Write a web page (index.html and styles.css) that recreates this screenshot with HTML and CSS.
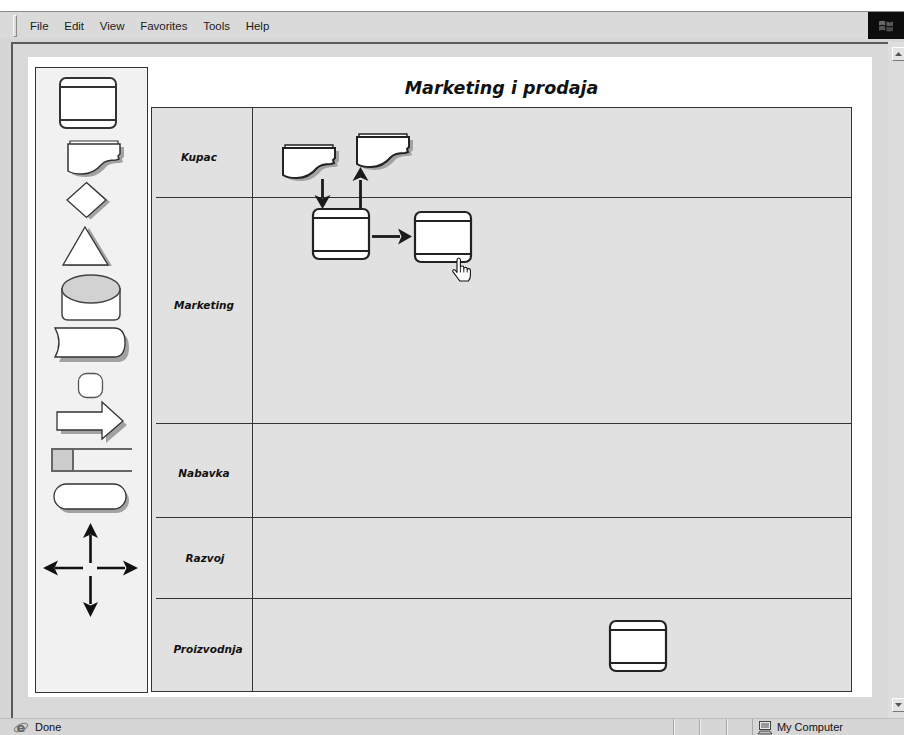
FILE: index.html
```html
<!DOCTYPE html>
<html lang="sr">
<head>
<meta charset="utf-8">
<title>Marketing i prodaja</title>
<link rel="stylesheet" href="styles.css">
</head>
<body>
<div class="browser">
  <div class="title-gap"></div>

  <div class="menubar">
    <span class="grip"></span>
    <ul class="menu">
      <li>File</li>
      <li>Edit</li>
      <li>View</li>
      <li>Favorites</li>
      <li>Tools</li>
      <li>Help</li>
    </ul>
    <div class="throbber">
      <svg width="16" height="14" viewBox="0 0 16 14">
        <path d="M1 2.5 Q4 1 7.2 2.3 V6.4 Q4 5.2 1 6.6 Z" fill="#6a6a6a"/>
        <path d="M8.4 2.6 Q11.5 4 15 2.4 V6.6 Q11.5 8 8.4 6.8 Z" fill="#5a5a5a"/>
        <path d="M1 7.6 Q4 6.2 7.2 7.5 V11.6 Q4 10.4 1 11.8 Z" fill="#555"/>
        <path d="M8.4 7.8 Q11.5 9.2 15 7.6 V11.8 Q11.5 13.2 8.4 12 Z" fill="#4a4a4a"/>
      </svg>
    </div>
  </div>

  <div class="client">
    <div class="viewport">
      <div class="page">

        <aside class="palette">
          <svg width="111" height="624" viewBox="0 0 111 624">
            <!-- process -->
            <rect x="24" y="10" width="56" height="50" rx="6" fill="#fff" stroke="#333" stroke-width="2"/>
            <path d="M24 19H80M24 52H80" stroke="#333" stroke-width="2"/>

            <!-- document -->
            <g transform="translate(31 72)">
              <path class="shade" transform="translate(4 3)" d="M1 4H53V14L51 16L52 19L49 20C42 20 38 21 35 24C30 30 24 34 15 34C9 34 4 33 1 31Z"/>
              <path d="M3 4V1H51V4" fill="#fff" stroke="#333" stroke-width="1.2"/>
              <path d="M1 4H53V14L51 16L52 19L49 20C42 20 38 21 35 24C30 30 24 34 15 34C9 34 4 33 1 31Z" fill="#fff" stroke="#333" stroke-width="1.5"/>
            </g>

            <!-- decision -->
            <polygon class="shade" points="54.5,117 74,134 54.5,151.5 35,134"/>
            <polygon points="50.5,114.5 70,132 50.5,149.5 31,132" fill="#fff" stroke="#333" stroke-width="1.3"/>

            <!-- merge -->
            <polygon class="shade" points="53,160 76,198 31,198"/>
            <polygon points="49,159 72,197 27,197" fill="#fff" stroke="#333" stroke-width="1.3"/>

            <!-- stored data -->
            <path d="M26 220V246Q26 252 32 252H78Q84 252 84 246V220" fill="#fff" stroke="#444" stroke-width="1.5"/>
            <ellipse cx="55" cy="221" rx="29" ry="14" fill="#d2d2d2" stroke="#444" stroke-width="1.5"/>

            <!-- delay -->
            <path class="shade" transform="translate(4 5)" d="M19 260H78Q89 260 89 274.5Q89 289 78 289H19Q27 274.5 19 260Z"/>
            <path d="M19 260H78Q89 260 89 274.5Q89 289 78 289H19Q27 274.5 19 260Z" fill="#fff" stroke="#333" stroke-width="1.3"/>

            <!-- connector -->
            <rect x="42.5" y="305.5" width="24" height="24" rx="8" fill="#fff" stroke="#555" stroke-width="1.3"/>

            <!-- off-page arrow -->
            <polygon class="shade" points="25,348 70,348 70,338 91,357 70,375 70,366 25,366"/>
            <polygon points="21,344 66,344 66,334 87,353 66,371 66,362 21,362" fill="#fff" stroke="#333" stroke-width="1.3"/>

            <!-- annotation -->
            <rect x="16" y="381" width="21" height="22" fill="#cdcdcd" stroke="#666" stroke-width="2"/>
            <path d="M15 381H96M15 403H96" stroke="#666" stroke-width="2"/>

            <!-- terminator -->
            <rect class="shade" x="21" y="420" width="72" height="25" rx="12.5"/>
            <rect x="18" y="416" width="72" height="25" rx="12.5" fill="#fff" stroke="#333" stroke-width="1.3"/>

            <!-- move tool -->
            <g fill="#111" stroke="none">
              <path d="M54.5 455L62 470L54.5 466.5L47 470Z"/>
              <path d="M54.5 549L62 534L54.5 537.5L47 534Z"/>
              <path d="M7 500L22 492.5L18.5 500L22 507.5Z"/>
              <path d="M102 500L87 492.5L90.5 500L87 507.5Z"/>
            </g>
            <path d="M54.5 467V495M54.5 508V536M19 500H47M61 500H89" stroke="#111" stroke-width="2.6"/>
          </svg>
        </aside>

        <section class="chart">
          <h1 class="chart-title">Marketing i prodaja</h1>
          <div class="lanes">
            <div class="lane lane-kupac"><div class="lane-label">Kupac</div><div class="lane-body"></div></div>
            <div class="lane lane-marketing"><div class="lane-label">Marketing</div><div class="lane-body"></div></div>
            <div class="lane lane-nabavka"><div class="lane-label">Nabavka</div><div class="lane-body"></div></div>
            <div class="lane lane-razvoj"><div class="lane-label">Razvoj</div><div class="lane-body"></div></div>
            <div class="lane lane-proizvodnja"><div class="lane-label">Proizvodnja</div><div class="lane-body"></div></div>

            <svg class="flow" width="699" height="583" viewBox="0 0 699 583">
              <defs>
                <g id="doc">
                  <path class="shade" transform="translate(4 3)" d="M1 4H53V14L51 16L52 19L49 20C42 20 38 21 35 24C30 30 24 34 15 34C9 34 4 33 1 31Z"/>
                  <path d="M3 4V1H51V4" fill="#fff" stroke="#222" stroke-width="1.4"/>
                  <path d="M1 4H53V14L51 16L52 19L49 20C42 20 38 21 35 24C30 30 24 34 15 34C9 34 4 33 1 31Z" fill="#fff" stroke="#222" stroke-width="2"/>
                </g>
                <g id="proc">
                  <rect x="1" y="1" width="56" height="50" rx="6" fill="#fff" stroke="#222" stroke-width="2.2"/>
                  <path d="M1 10H57M1 43H57" stroke="#222" stroke-width="2.2"/>
                </g>
              </defs>

              <use href="#doc" x="130" y="36"/>
              <use href="#doc" x="204" y="25"/>
              <use href="#proc" x="160" y="100"/>
              <use href="#proc" x="262" y="103"/>
              <use href="#proc" x="457" y="512"/>

              <g stroke="#1a1a1a" stroke-width="2.8" fill="none">
                <path d="M170.5 71V90"/>
                <path d="M208.5 100V72"/>
                <path d="M220 128.5H248"/>
              </g>
              <g fill="#1a1a1a">
                <path d="M170.5 101L162.5 87L170.5 90.5L178.5 87Z"/>
                <path d="M208.5 59L216.5 73L208.5 69.5L200.5 73Z"/>
                <path d="M260 128.5L246 120.5L249.5 128.5L246 136.5Z"/>
              </g>

              <!-- pointer over the second activity -->
              <g transform="translate(300 150)">
                <path d="M5 2Q5 0 6.7 0Q8.4 0 8.4 2V9.5Q8.6 8 10.2 8Q11.8 8 11.8 9.8V10.6Q12 9.2 13.6 9.2Q15.2 9.2 15.2 11V11.8Q15.4 10.6 16.8 10.6Q18.4 10.6 18.4 12.4V17.5Q18.4 20.5 16.4 23H8Q6.6 21.5 4.5 18.5L1 13.8Q0.2 12.4 1.6 11.8Q2.8 11.4 3.8 12.8L5 14.4Z" fill="#fff" stroke="#111" stroke-width="1.1" stroke-linejoin="round"/>
                <path d="M8.4 10V14.5M11.8 10.8V14.5M15.2 11.8V14.5" stroke="#111" stroke-width="0.9"/>
              </g>
            </svg>
          </div>
        </section>

      </div>
    </div>

    <div class="vscroll">
      <span class="sb-btn sb-up"><svg width="7" height="4" viewBox="0 0 7 4"><path d="M3.5 0L7 4H0Z" fill="#555"/></svg></span>
      <span class="sb-track"></span>
      <span class="sb-btn sb-down"><svg width="7" height="4" viewBox="0 0 7 4"><path d="M0 0H7L3.5 4Z" fill="#555"/></svg></span>
    </div>
  </div>

  <div class="statusbar">
    <div class="status-main">
      <svg class="status-icon" width="16" height="16" viewBox="0 0 16 16">
        <ellipse cx="8" cy="8.5" rx="7.2" ry="3.2" fill="none" stroke="#888" stroke-width="1.2" transform="rotate(-25 8 8.5)"/>
        <text x="8" y="12.5" text-anchor="middle" font-family="DejaVu Sans, sans-serif" font-size="13" font-weight="bold" fill="#666">e</text>
      </svg>
      <span>Done</span>
    </div>
    <div class="status-cell"></div>
    <div class="status-cell"></div>
    <div class="status-cell"></div>
    <div class="status-zone">
      <svg class="status-icon" width="16" height="15" viewBox="0 0 16 15">
        <rect x="2.5" y="1.5" width="11" height="8" fill="#e8e8e8" stroke="#444"/>
        <rect x="4" y="3" width="8" height="5" fill="#9a9a9a"/>
        <path d="M1 14L3 11H13L15 14Z" fill="#bbb" stroke="#444" stroke-width="0.9"/>
      </svg>
      <span>My Computer</span>
    </div>
  </div>
</div>
</body>
</html>
```

FILE: styles.css
```css
* {
  box-sizing: border-box;
}

html,
body {
  margin: 0;
  padding: 0;
}

body {
  width: 904px;
  height: 735px;
  overflow: hidden;
  background: #fff;
  font-family: "Liberation Sans", Arial, sans-serif;
  color: #111;
}

.browser {
  display: flex;
  flex-direction: column;
  width: 904px;
  height: 735px;
}

.title-gap {
  height: 11px;
  background: #fff;
}

/* menu bar */
.menubar {
  display: flex;
  align-items: center;
  height: 28px;
  background: #dadada;
  border-top: 1px solid #8c8c8c;
}

.grip {
  width: 4px;
  height: 22px;
  margin-left: 13px;
  border-left: 1px solid #fafafa;
  border-top: 1px solid #fafafa;
  border-right: 1px solid #8a8a8a;
  border-bottom: 1px solid #8a8a8a;
}

.menu {
  display: flex;
  margin: 0 0 0 5px;
  padding: 0;
  list-style: none;
  font-size: 11.5px;
  color: #1a1a1a;
}

.menu li {
  padding: 0 7.7px 0 8px;
}

.throbber {
  display: flex;
  align-items: center;
  justify-content: center;
  width: 36px;
  height: 27px;
  margin-left: auto;
  background: #0d0d0d;
}

/* page area */
.client {
  display: flex;
  height: 679px;
  padding: 3px 0 0 11px;
  background: #d6d6d6;
}

.viewport {
  flex: 1;
  padding: 13px 16px 0 15px;
  border-top: 2px solid #5a5a5a;
  border-left: 2px solid #5a5a5a;
  background: #d9d9d9;
}

.page {
  display: flex;
  align-items: flex-start;
  width: 844px;
  height: 640px;
  background: #fff;
}

.palette {
  width: 113px;
  height: 626px;
  margin: 10px 0 0 7px;
  border: 1px solid #333;
  background: #f1f1f1;
}

.palette svg {
  display: block;
}

.shade {
  fill: #a2a2a2;
}

.chart {
  width: 701px;
  margin-left: 3px;
}

.chart-title {
  height: 50px;
  margin: 0;
  padding-top: 21px;
  font-family: "DejaVu Sans", Verdana, sans-serif;
  font-size: 17.5px;
  font-style: italic;
  font-weight: bold;
  line-height: 20px;
  text-align: center;
  color: #111;
}

.lanes {
  position: relative;
  height: 585px;
  padding-left: 4px;
  border: 1px solid #333;
  background: #e1e1e1;
}

.lane {
  display: flex;
}

.lane + .lane {
  border-top: 1px solid #333;
}

.lane-kupac { height: 89px; }
.lane-marketing { height: 226px; }
.lane-nabavka { height: 94px; }
.lane-razvoj { height: 81px; }
.lane-proizvodnja { height: 93px; }

.lane-label {
  display: flex;
  align-items: center;
  justify-content: center;
  width: 97px;
  border-right: 1px solid #333;
  font-family: "DejaVu Sans", Verdana, sans-serif;
  font-size: 10.5px;
  font-style: italic;
  font-weight: bold;
  color: #111;
}

/* labels sit a little off the lane middle */
.lane-kupac .lane-label { padding: 8px 10px 0 0; }
.lane-marketing .lane-label { padding-bottom: 11px; }
.lane-nabavka .lane-label { padding: 4px 0 0 0; }
.lane-razvoj .lane-label { padding-left: 2px; }
.lane-proizvodnja .lane-label { padding: 8px 0 0 8px; }

.lane-body {
  flex: 1;
}

.flow {
  position: absolute;
  left: 0;
  top: 0;
  pointer-events: none;
}

/* scrollbar */
.vscroll {
  display: flex;
  flex-direction: column;
  width: 16px;
  padding-top: 5px;
  background: #dedede;
}

.sb-btn {
  display: flex;
  align-items: center;
  justify-content: center;
  height: 14px;
  margin-left: 4px;
  background: #e4e4e4;
  border-top: 1px solid #fff;
  border-left: 1px solid #fff;
  border-bottom: 1px solid #777;
}

.sb-track {
  flex: 1;
  background: #dcdcdc;
}

.sb-down {
  margin-bottom: 6px;
}

/* status bar */
.statusbar {
  display: flex;
  height: 17px;
  background: #d6d6d6;
  border-top: 1px solid #bdbdbd;
  font-size: 11px;
  color: #111;
}

.status-main {
  display: flex;
  align-items: center;
  width: 673px;
  padding-left: 13px;
}

.status-icon {
  flex: none;
  margin-right: 4px;
}

.status-main span {
  margin-left: 2px;
}

.status-cell {
  width: 26.3px;
  border-left: 1px solid #a8a8a8;
  box-shadow: inset 1px 0 0 #f0f0f0;
}

.status-zone {
  display: flex;
  align-items: center;
  flex: 1;
  padding-left: 4px;
  border-left: 1px solid #a8a8a8;
}
```
